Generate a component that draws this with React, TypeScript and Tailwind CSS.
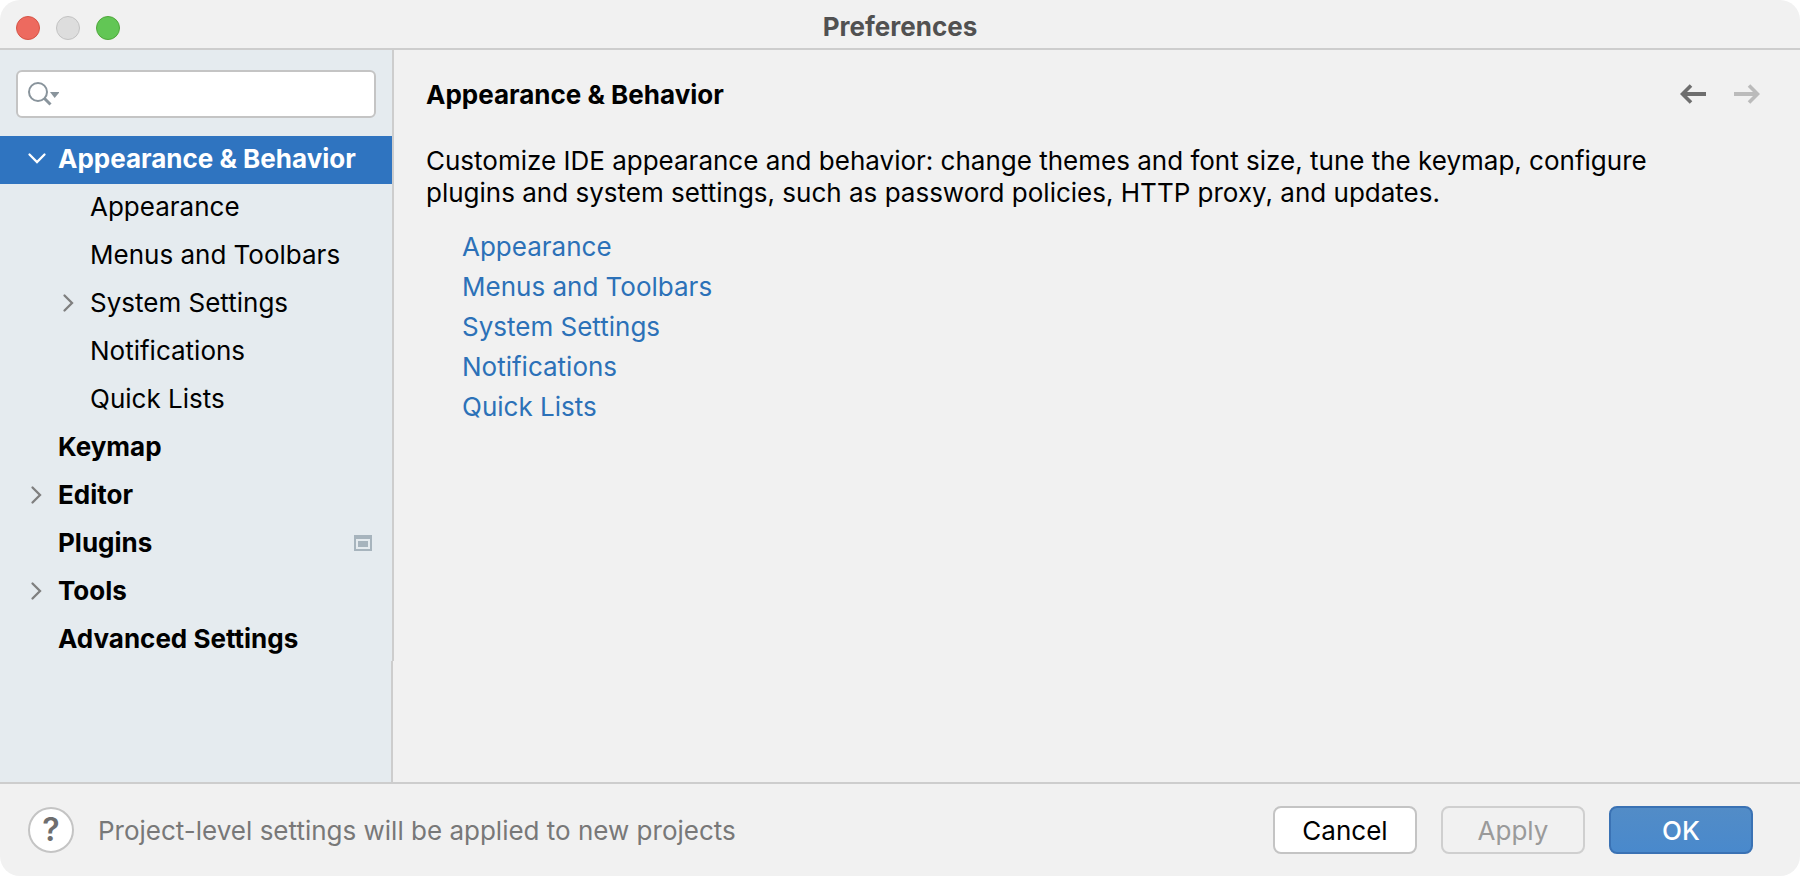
import clsx from "clsx";
import { useState } from "react";

interface TreeItem {
  label: string;
  child?: boolean;
  expandable?: boolean;
  expanded?: boolean;
  projectLevel?: boolean;
}

const TREE: TreeItem[] = [
  { expandable: true, expanded: true, label: "Appearance & Behavior" },
  { child: true, label: "Appearance" },
  { child: true, label: "Menus and Toolbars" },
  { child: true, expandable: true, label: "System Settings" },
  { child: true, label: "Notifications" },
  { child: true, label: "Quick Lists" },
  { label: "Keymap" },
  { expandable: true, label: "Editor" },
  { label: "Plugins", projectLevel: true },
  { expandable: true, label: "Tools" },
  { label: "Advanced Settings" }
];

const LINKS = [
  "Appearance",
  "Menus and Toolbars",
  "System Settings",
  "Notifications",
  "Quick Lists"
];

const Chevron = ({ expanded }: { expanded?: boolean }) => (
  <svg
    aria-hidden="true"
    className={clsx("size-6 shrink-0", !expanded && "text-[#7f7f7f]")}
    fill="none"
    stroke="currentColor"
    strokeLinecap="round"
    strokeWidth="2.3"
    viewBox="0 0 24 24"
  >
    <path d={expanded ? "M5.5 7.5L13 15L20.5 7.5" : "M8.5 4.5L16 12L8.5 19.5"} />
  </svg>
);

const SearchIcon = () => (
  <svg aria-hidden="true" className="h-6 w-8" fill="none" viewBox="0 0 32 24">
    <circle cx="11" cy="10" r="9" stroke="#89949c" strokeWidth="2" />
    <path d="M17 16L23.5 22.5" stroke="#89949c" strokeWidth="3" />
    <path d="M23 10H32.5L27.7 16Z" fill="#89949c" />
  </svg>
);

const ProjectIcon = () => (
  <svg aria-hidden="true" className="h-4 w-[18px]" viewBox="0 0 18 16">
    <path d="M0 0H18V16H0ZM2 4V14H16V4Z" fill="#a7b4bd" fillRule="evenodd" />
    <path d="M4 6H14V12H4Z" fill="#a7b4bd" />
  </svg>
);

const Arrow = ({ forward }: { forward?: boolean }) => (
  <svg
    aria-hidden="true"
    className={clsx("h-5 w-[26px]", forward && "rotate-180")}
    fill="none"
    stroke="currentColor"
    viewBox="0 0 26 20"
  >
    <path d="M3 10H26" strokeWidth="4" />
    <path d="M11 1.5L2.5 10L11 18.5" strokeWidth="3.6" />
  </svg>
);

const TitleBar = () => (
  <header className="grid h-[50px] grid-cols-3 items-center border-[#cdcdcd] border-b-2 px-4">
    <div className="flex gap-4 pt-2">
      <button
        aria-label="Close"
        className="size-6 rounded-full border border-[#d55446] bg-[#ed6a5f]"
        type="button"
      />
      <button
        aria-label="Minimize"
        className="size-6 rounded-full border border-[#c2c2c2] bg-[#dddddd]"
        disabled
        type="button"
      />
      <button
        aria-label="Zoom"
        className="size-6 rounded-full border border-[#4fa73b] bg-[#62c655]"
        type="button"
      />
    </div>
    <h1 className="pt-1.5 text-center font-bold text-[#515151]">
      Preferences
    </h1>
  </header>
);

const Sidebar = () => {
  const [selected, setSelected] = useState("Appearance & Behavior");

  return (
    <aside className="flex w-[394px] shrink-0 flex-col">
      <div className="border-[#cdcdcd] border-r-2 bg-[#e5ebef] pt-5">
        <div className="relative mx-4 mb-[18px]">
          <div className="pointer-events-none absolute top-3 left-[11px]">
            <SearchIcon />
          </div>
          <input
            aria-label="Search settings"
            className="block h-12 w-full rounded-md border-2 border-[#c4c4c4] bg-white pr-3 pl-12 outline-none"
            type="text"
          />
        </div>
        <ul className="-mb-[3px]">
          {TREE.map((item) => {
            const active = selected === item.label;

            return (
              <li key={item.label}>
                <button
                  aria-expanded={
                    item.expandable ? Boolean(item.expanded) : undefined
                  }
                  className={clsx(
                    "flex h-12 w-full items-center gap-2.5 whitespace-nowrap pr-5 pb-0.5 text-left",
                    item.child ? "pl-14" : "pl-6 font-bold",
                    active ? "bg-[#2f74c0] text-white" : "text-black"
                  )}
                  onClick={() => setSelected(item.label)}
                  type="button"
                >
                  {item.expandable ? (
                    <Chevron expanded={item.expanded} />
                  ) : (
                    <span className="size-6 shrink-0" />
                  )}
                  <span className="grow">{item.label}</span>
                  {item.projectLevel && <ProjectIcon />}
                </button>
              </li>
            );
          })}
        </ul>
      </div>
      <div className="w-[393px] grow border-[#cdcdcd] border-r-2 bg-[#e5ebef]" />
    </aside>
  );
};

const Content = () => (
  <main className="grow pt-7 pr-10 pl-8">
    <div className="flex h-8 items-center justify-between">
      <h2 className="pt-0.5 font-bold">Appearance & Behavior</h2>
      <nav aria-label="History" className="flex gap-7">
        <button aria-label="Back" className="text-[#6e6e6e]" type="button">
          <Arrow />
        </button>
        <button
          aria-label="Forward"
          className="text-[#bbbbbb]"
          disabled
          type="button"
        >
          <Arrow forward />
        </button>
      </nav>
    </div>
    <p className="mt-[35px] max-w-[1260px] leading-8">
      Customize IDE appearance and behavior: change themes and font size, tune
      the keymap, configure plugins and system settings, such as password
      policies, HTTP proxy, and updates.
    </p>
    <ul className="mt-[18px] pl-9 leading-10">
      {LINKS.map((link) => (
        <li key={link}>
          <a className="text-[#2c71b8]" href="#settings">
            {link}
          </a>
        </li>
      ))}
    </ul>
  </main>
);

const Footer = () => (
  <footer className="flex h-[94px] items-center border-[#cdcdcd] border-t-2 pr-[47px] pl-7">
    <button
      aria-label="Help"
      className="size-[46px] rounded-full border-2 border-[#c4c4c4] bg-white font-semibold text-[#6e6e6e] text-[32px] leading-none"
      type="button"
    >
      ?
    </button>
    <p className="ml-6 grow pt-0.5 text-[#787878]">
      Project-level settings will be applied to new projects
    </p>
    <div className="flex gap-6">
      <button
        className="h-12 w-36 rounded-lg border-2 border-[#c4c4c4] bg-white pt-0.5"
        type="button"
      >
        Cancel
      </button>
      <button
        className="h-12 w-36 rounded-lg border-2 border-[#cfcfcf] pt-0.5 text-[#9a9a9a]"
        disabled
        type="button"
      >
        Apply
      </button>
      <button
        className="h-12 w-36 rounded-lg border-2 border-[#3a72b4] bg-linear-to-b from-[#528cc7] to-[#4989cc] pt-0.5 font-medium text-white"
        type="button"
      >
        OK
      </button>
    </div>
  </footer>
);

const App = () => (
  <div className="min-h-screen bg-white">
    <div className="flex min-h-screen flex-col overflow-hidden rounded-[20px] bg-[#f1f1f1] font-['Inter',sans-serif] text-[26px] text-black leading-8">
      <TitleBar />
      <div className="flex grow">
        <Sidebar />
        <Content />
      </div>
      <Footer />
    </div>
  </div>
);

export default App;
